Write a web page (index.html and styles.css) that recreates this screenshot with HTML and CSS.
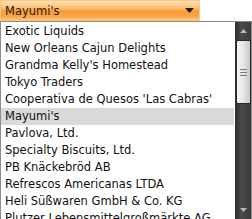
FILE: index.html
```html
<!DOCTYPE html>
<html>
<head>
<meta charset="utf-8">
<link rel="stylesheet" href="styles.css">
</head>
<body>
<div class="combo">
  <span class="combo-text">Mayumi's</span>
  <svg class="combo-arrow" width="9" height="5" viewBox="0 0 9 5"><path d="M0 0H9L4.5 5Z" fill="#1a1a1a"/></svg>
</div>
<div class="list">
  <div class="items">
    <div class="item">Exotic Liquids</div>
    <div class="item">New Orleans Cajun Delights</div>
    <div class="item">Grandma Kelly's Homestead</div>
    <div class="item">Tokyo Traders</div>
    <div class="item">Cooperativa de Quesos 'Las Cabras'</div>
    <div class="item selected">Mayumi's</div>
    <div class="item">Pavlova, Ltd.</div>
    <div class="item">Specialty Biscuits, Ltd.</div>
    <div class="item">PB Knäckebröd AB</div>
    <div class="item">Refrescos Americanas LTDA</div>
    <div class="item">Heli Süßwaren GmbH &amp; Co. KG</div>
    <div class="item">Plutzer Lebensmittelgroßmärkte AG</div>
  </div>
  <div class="scrollbar">
    <div class="sb-btn"><svg width="7" height="4" viewBox="0 0 7 4"><path d="M0 4H7L3.5 0Z" fill="#b8b8b8"/></svg></div>
    <div class="thumb"><span class="grip"></span></div>
    <div class="track"></div>
    <div class="sb-btn"><svg width="7" height="4" viewBox="0 0 7 4"><path d="M0 0H7L3.5 4Z" fill="#b8b8b8"/></svg></div>
  </div>
</div>
</body>
</html>
```
FILE: styles.css
```css
html, body {
  margin: 0;
  padding: 0;
  background: #fff;
  overflow: hidden;
}
body {
  width: 252px;
  height: 219px;
  font-family: "DejaVu Sans", Verdana, sans-serif;
  font-size: 11.5px;
  color: #111;
}
.combo {
  box-sizing: border-box;
  width: 200px;
  height: 21px;
  border: 1px solid #fcc77f;
  background: linear-gradient(to bottom, #fde0b4 0%, #fcc27c 35%, #f99a38 55%, #fba64a 80%, #fdc276 100%);
  display: flex;
  align-items: center;
  justify-content: space-between;
  padding: 0 4px 0 4px;
}
.combo-text {
  color: #2a1a08;
  font-size: 11.5px;
}
.combo-arrow {
  display: block;
  margin-right: 1px;
}
.list {
  box-sizing: border-box;
  width: 252px;
  height: 198px;
  border: 1px solid #8c8c8c;
  border-bottom: none;
  display: flex;
  overflow: hidden;
}
.items {
  width: 233px;
  padding-top: 1px;
  display: flex;
  flex-direction: column;
}
.item {
  height: 17px;
  line-height: 17px;
  padding-left: 4px;
  white-space: nowrap;
  font-size: 11.5px;
  flex-shrink: 0;
}
.item.selected {
  background: #dadada;
}
.scrollbar {
  margin-left: 1px;
  width: 16px;
  height: 197px;
  background: linear-gradient(to right, #2e2e2e, #4a4a4a 40%, #3a3a3a);
  display: flex;
  flex-direction: column;
  align-items: center;
}
.sb-btn {
  height: 18px;
  width: 16px;
  display: flex;
  align-items: center;
  justify-content: center;
  flex-shrink: 0;
}
.thumb {
  box-sizing: border-box;
  width: 15px;
  height: 64px;
  border: 1px solid #2a2a2a;
  border-radius: 2px;
  background: linear-gradient(to right, #f4f4f4, #e6e6e6 50%, #c8c8c8);
  display: flex;
  align-items: center;
  justify-content: center;
}
.grip {
  width: 7px;
  height: 5px;
  border-top: 1px solid #7a7a7a;
  border-bottom: 1px solid #7a7a7a;
  background: linear-gradient(#7a7a7a, #7a7a7a) center / 100% 1px no-repeat;
}
.track {
  flex: 1;
}
```
